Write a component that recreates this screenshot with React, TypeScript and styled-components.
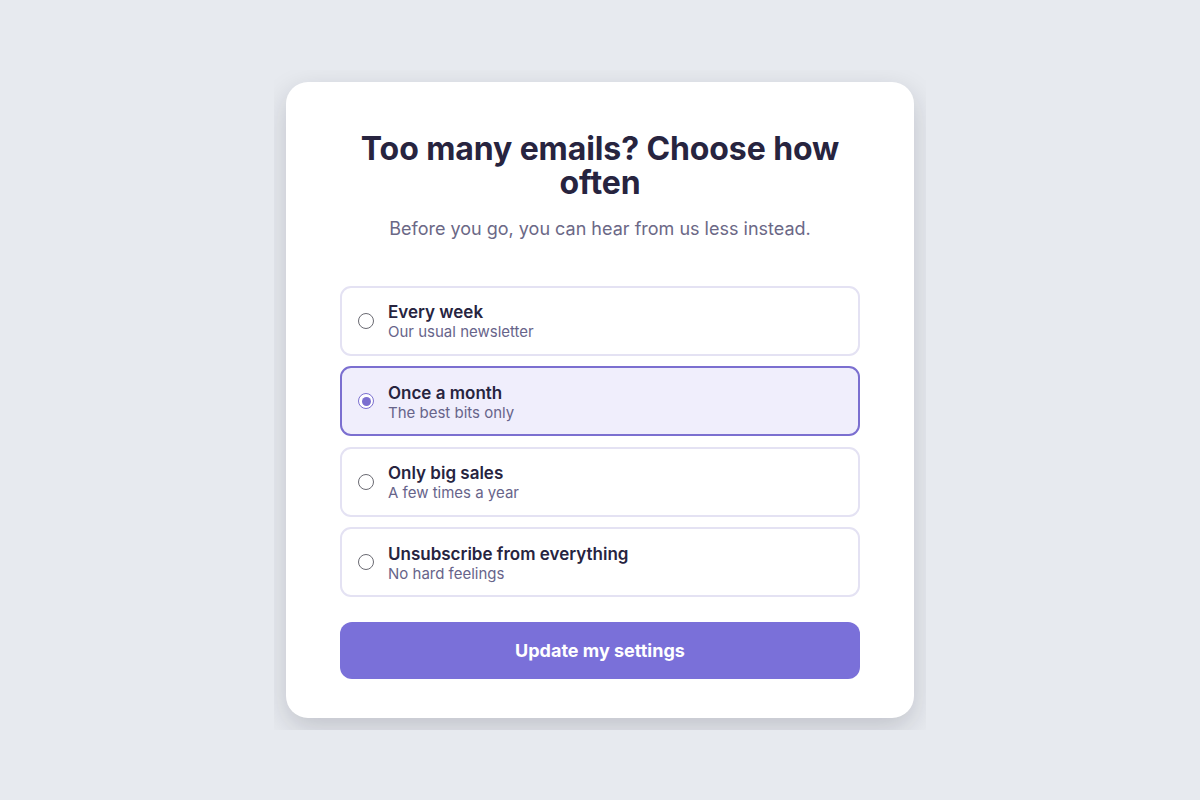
import React, { useState } from "react";
import styled, { createGlobalStyle } from "styled-components";

const Global = createGlobalStyle`
  html, body { margin: 0; padding: 0; background: #e7eaef; }
  body { font-family: Inter, "Noto Sans", sans-serif; -webkit-font-smoothing: antialiased; }
`;

const Page = styled.div`
  width: 1200px;
  height: 800px;
  display: flex;
  align-items: center;
  justify-content: center;
`;

const Frame = styled.div`
  padding: 12px;
  overflow: hidden;
`;

const Card = styled.div`
  width: 628px;
  box-sizing: border-box;
  background: #ffffff;
  border-radius: 22px;
  padding: 50px 54px 39px;
  box-shadow: 0 10px 28px rgba(20, 22, 40, 0.18);
  display: flex;
  flex-direction: column;
`;

const Title = styled.h1`
  margin: 0;
  font-size: 32px;
  line-height: 34px;
  font-weight: 700;
  color: #27243f;
  text-align: center;
  letter-spacing: -0.1px;
  padding: 0 10px;
`;

const Subtitle = styled.p`
  margin: 16px 0 44px;
  font-size: 18px;
  line-height: 26px;
  color: #6b6886;
  text-align: center;
`;

const Options = styled.div`
  display: flex;
  flex-direction: column;
  gap: 10.5px;
`;

const Option = styled.label<{ $selected: boolean }>`
  display: flex;
  align-items: center;
  gap: 14px;
  height: 70px;
  box-sizing: border-box;
  padding: 0 17px 0 16px;
  border-radius: 11px;
  border: 2px solid ${(p) => (p.$selected ? "#7b6fd0" : "#e4e2f3")};
  background: ${(p) => (p.$selected ? "#f0eefc" : "#ffffff")};
  cursor: pointer;
`;

const Radio = styled.span<{ $selected: boolean }>`
  width: 16px;
  height: 16px;
  box-sizing: border-box;
  border-radius: 50%;
  border: 1.5px solid ${(p) => (p.$selected ? "#7b6fd0" : "#6a6a72")};
  background: #fff;
  display: flex;
  align-items: center;
  justify-content: center;
  flex-shrink: 0;
  &::after {
    content: "";
    width: 9px;
    height: 9px;
    border-radius: 50%;
    background: #7b6fd0;
    display: ${(p) => (p.$selected ? "block" : "none")};
  }
`;

const OptText = styled.div`
  display: flex;
  flex-direction: column;
  padding-top: 2px;
`;

const OptTitle = styled.span`
  font-size: 17px;
  line-height: 21px;
  font-weight: 600;
  color: #27243f;
`;

const OptDesc = styled.span`
  font-size: 15px;
  line-height: 18px;
  color: #67648a;
`;

const Button = styled.button`
  margin-top: 25px;
  height: 57px;
  border: none;
  border-radius: 12px;
  background: #7a70d9;
  color: #ffffff;
  font-family: Inter, "Noto Sans", sans-serif;
  font-size: 18px;
  font-weight: 700;
  cursor: pointer;
`;

const items = [
  { t: "Every week", d: "Our usual newsletter" },
  { t: "Once a month", d: "The best bits only" },
  { t: "Only big sales", d: "A few times a year" },
  { t: "Unsubscribe from everything", d: "No hard feelings" },
];

export default function App() {
  const [sel, setSel] = useState(1);
  return (
    <>
      <Global />
      <Page>
        <Frame>
          <Card>
            <Title>Too many emails? Choose how often</Title>
            <Subtitle>Before you go, you can hear from us less instead.</Subtitle>
            <Options>
              {items.map((it, i) => (
                <Option key={it.t} $selected={sel === i} onClick={() => setSel(i)}>
                  <Radio $selected={sel === i} />
                  <OptText>
                    <OptTitle>{it.t}</OptTitle>
                    <OptDesc>{it.d}</OptDesc>
                  </OptText>
                </Option>
              ))}
            </Options>
            <Button>Update my settings</Button>
          </Card>
        </Frame>
      </Page>
    </>
  );
}
